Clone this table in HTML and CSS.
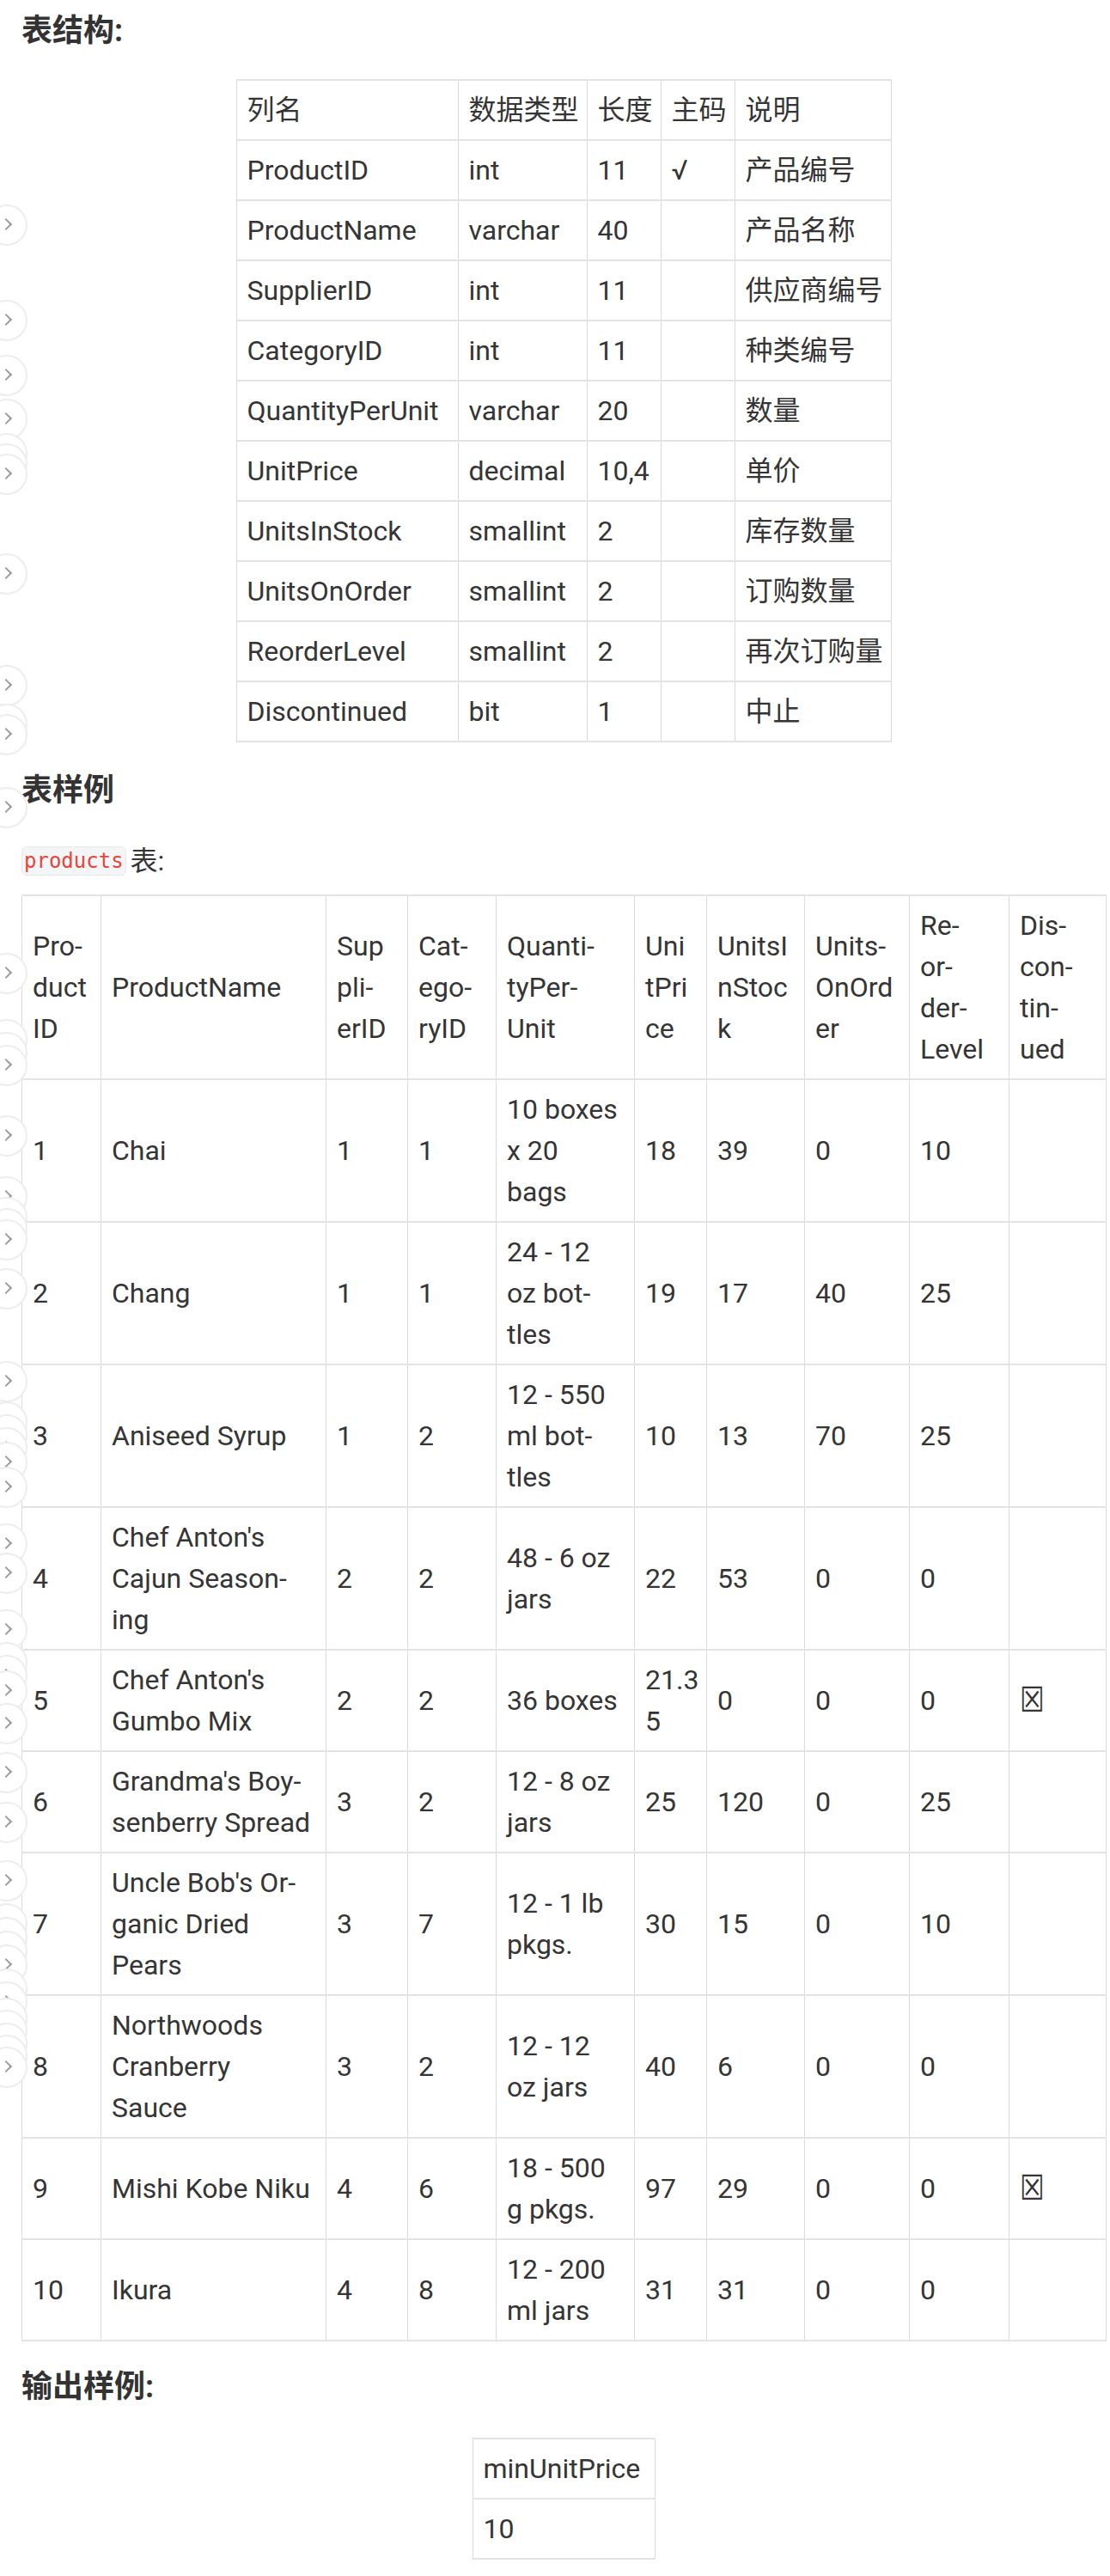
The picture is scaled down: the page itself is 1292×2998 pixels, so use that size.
FILE: index.html
```html
<!DOCTYPE html>
<html lang="zh-CN">
<head>
<meta charset="utf-8">
<title>products 表</title>
<link rel="stylesheet" href="styles.css">
</head>
<body>
<div class="page">
  <h2 class="title">表结构:</h2>
  <table class="grid schema">
    <colgroup><col class="c258"><col class="c150"><col class="c86"><col class="c86"><col class="c182"></colgroup>
    <thead>
      <tr><th>列名</th><th>数据类型</th><th>长度</th><th>主码</th><th>说明</th></tr>
    </thead>
    <tbody>
      <tr><td>ProductID</td><td>int</td><td>11</td><td>√</td><td>产品编号</td></tr>
      <tr><td>ProductName</td><td>varchar</td><td>40</td><td></td><td>产品名称</td></tr>
      <tr><td>SupplierID</td><td>int</td><td>11</td><td></td><td>供应商编号</td></tr>
      <tr><td>CategoryID</td><td>int</td><td>11</td><td></td><td>种类编号</td></tr>
      <tr><td>QuantityPerUnit</td><td>varchar</td><td>20</td><td></td><td>数量</td></tr>
      <tr><td>UnitPrice</td><td>decimal</td><td>10,4</td><td></td><td>单价</td></tr>
      <tr><td>UnitsInStock</td><td>smallint</td><td>2</td><td></td><td>库存数量</td></tr>
      <tr><td>UnitsOnOrder</td><td>smallint</td><td>2</td><td></td><td>订购数量</td></tr>
      <tr><td>ReorderLevel</td><td>smallint</td><td>2</td><td></td><td>再次订购量</td></tr>
      <tr><td>Discontinued</td><td>bit</td><td>1</td><td></td><td>中止</td></tr>
    </tbody>
  </table>

  <h2 class="title sec">表样例</h2>
  <p class="caption"><code class="inline-code">products</code>表:</p>
  <table class="grid sample">
    <colgroup>
      <col class="c92"><col class="c262"><col class="c95"><col class="c103"><col class="c161">
      <col class="c84"><col class="c114"><col class="c122"><col class="c116"><col class="c113">
    </colgroup>
    <thead>
      <tr>
        <th>Pro-<br>duct<br>ID</th>
        <th>ProductName</th>
        <th>Sup<br>pli-<br>erID</th>
        <th>Cat-<br>ego-<br>ryID</th>
        <th>Quanti-<br>tyPer-<br>Unit</th>
        <th>Uni<br>tPri<br>ce</th>
        <th>UnitsI<br>nStoc<br>k</th>
        <th>Units-<br>OnOrd<br>er</th>
        <th>Re-<br>or-<br>der-<br>Level</th>
        <th>Dis-<br>con-<br>tin-<br>ued</th>
      </tr>
    </thead>
    <tbody>
      <tr><td>1</td><td>Chai</td><td>1</td><td>1</td><td>10 boxes<br>x 20<br>bags</td><td>18</td><td>39</td><td>0</td><td>10</td><td></td></tr>
      <tr><td>2</td><td>Chang</td><td>1</td><td>1</td><td>24 - 12<br>oz bot-<br>tles</td><td>19</td><td>17</td><td>40</td><td>25</td><td></td></tr>
      <tr><td>3</td><td>Aniseed Syrup</td><td>1</td><td>2</td><td>12 - 550<br>ml bot-<br>tles</td><td>10</td><td>13</td><td>70</td><td>25</td><td></td></tr>
      <tr><td>4</td><td>Chef Anton's<br>Cajun Season-<br>ing</td><td>2</td><td>2</td><td>48 - 6 oz<br>jars</td><td>22</td><td>53</td><td>0</td><td>0</td><td></td></tr>
      <tr><td>5</td><td>Chef Anton's<br>Gumbo Mix</td><td>2</td><td>2</td><td>36 boxes</td><td>21.3<br>5</td><td>0</td><td>0</td><td>0</td><td><span class="box">☒</span></td></tr>
      <tr><td>6</td><td>Grandma's Boy-<br>senberry Spread</td><td>3</td><td>2</td><td>12 - 8 oz<br>jars</td><td>25</td><td>120</td><td>0</td><td>25</td><td></td></tr>
      <tr><td>7</td><td>Uncle Bob's Or-<br>ganic Dried<br>Pears</td><td>3</td><td>7</td><td>12 - 1 lb<br>pkgs.</td><td>30</td><td>15</td><td>0</td><td>10</td><td></td></tr>
      <tr><td>8</td><td>Northwoods<br>Cranberry<br>Sauce</td><td>3</td><td>2</td><td>12 - 12<br>oz jars</td><td>40</td><td>6</td><td>0</td><td>0</td><td></td></tr>
      <tr><td>9</td><td>Mishi Kobe Niku</td><td>4</td><td>6</td><td>18 - 500<br>g pkgs.</td><td>97</td><td>29</td><td>0</td><td>0</td><td><span class="box">☒</span></td></tr>
      <tr><td>10</td><td>Ikura</td><td>4</td><td>8</td><td>12 - 200<br>ml jars</td><td>31</td><td>31</td><td>0</td><td>0</td><td></td></tr>
    </tbody>
  </table>

  <h2 class="title out">输出样例:</h2>
  <table class="grid result">
    <colgroup><col class="c212"></colgroup>
    <thead><tr><th>minUnitPrice</th></tr></thead>
    <tbody><tr><td>10</td></tr></tbody>
  </table>

  <div class="toggles">
    <span class="tg" style="top:238px"></span>
    <span class="tg" style="top:349px"></span>
    <span class="tg" style="top:413px"></span>
    <span class="tg" style="top:464px"></span>
    <span class="tg" style="top:504px"></span>
    <span class="tg" style="top:516px"></span>
    <span class="tg" style="top:528px"></span>
    <span class="tg" style="top:644px"></span>
    <span class="tg" style="top:774px"></span>
    <span class="tg" style="top:819px"></span>
    <span class="tg" style="top:831px"></span>
    <span class="tg" style="top:916px"></span>
    <span class="tg" style="top:1109px"></span>
    <span class="tg" style="top:1186px"></span>
    <span class="tg" style="top:1201px"></span>
    <span class="tg" style="top:1216px"></span>
    <span class="tg" style="top:1298px"></span>
    <span class="tg" style="top:1369px"></span>
    <span class="tg" style="top:1393px"></span>
    <span class="tg" style="top:1406px"></span>
    <span class="tg" style="top:1419px"></span>
    <span class="tg" style="top:1476px"></span>
    <span class="tg" style="top:1584px"></span>
    <span class="tg" style="top:1631px"></span>
    <span class="tg" style="top:1646px"></span>
    <span class="tg" style="top:1661px"></span>
    <span class="tg" style="top:1678px"></span>
    <span class="tg" style="top:1707px"></span>
    <span class="tg" style="top:1773px"></span>
    <span class="tg" style="top:1807px"></span>
    <span class="tg" style="top:1873px"></span>
    <span class="tg" style="top:1911px"></span>
    <span class="tg" style="top:1926px"></span>
    <span class="tg" style="top:1944px"></span>
    <span class="tg" style="top:1982px"></span>
    <span class="tg" style="top:2039px"></span>
    <span class="tg" style="top:2097px"></span>
    <span class="tg" style="top:2165px"></span>
    <span class="tg" style="top:2215px"></span>
    <span class="tg" style="top:2231px"></span>
    <span class="tg" style="top:2247px"></span>
    <span class="tg" style="top:2263px"></span>
    <span class="tg" style="top:2291px"></span>
    <span class="tg" style="top:2306px"></span>
    <span class="tg" style="top:2325px"></span>
    <span class="tg" style="top:2339px"></span>
    <span class="tg" style="top:2354px"></span>
    <span class="tg" style="top:2368px"></span>
    <span class="tg" style="top:2382px"></span>
  </div>
</div>
</body>
</html>
```
FILE: styles.css
```css
html, body {
  margin: 0;
  padding: 0;
  background: #ffffff;
}

body {
  color: #353535;
  font-family: Roboto, "Noto Sans CJK SC", "Noto Sans", sans-serif;
  font-size: 32px;
  line-height: 48px;
}

.page {
  position: relative;
  padding: 11px 5px 0 25px;
  min-height: 2987px;
}

.title {
  margin: 0;
  font-size: 36px;
  line-height: 50px;
  font-weight: 700;
  color: #333333;
}

.title.sec {
  margin-top: 31px;
}

.title.out {
  margin-top: 28px;
}

.caption {
  margin: 33px 0 15px;
  line-height: 48px;
}

.inline-code {
  display: inline-block;
  vertical-align: top;
  margin-top: 7px;
  margin-right: 5px;
  padding: 1px 2px;
  font-family: "DejaVu Sans Mono", "Liberation Mono", monospace;
  font-size: 24px;
  line-height: 30px;
  color: #e5453b;
  background: #f4f5f6;
  border: 1px solid #e8e9ea;
  border-radius: 6px;
}

.grid {
  border-collapse: collapse;
  table-layout: fixed;
}

.grid th,
.grid td {
  padding: 10px 12px;
  text-align: left;
  vertical-align: middle;
  border-top: 2px solid #e3e3e3;
  border-bottom: 2px solid #e3e3e3;
  border-left: 1px solid #dadada;
  border-right: 1px solid #dadada;
  white-space: nowrap;
  overflow: visible;
}

.grid th {
  font-weight: 400;
}

.schema {
  width: 762px;
  margin: 31px auto 0;
}

.sample {
  width: 1262px;
  margin: 0;
}

.result {
  width: 212px;
  margin: 34px auto 0;
}

.c258 { width: 258px; }
.c150 { width: 150px; }
.c86 { width: 86px; }
.c182 { width: 182px; }
.c92 { width: 92px; }
.c262 { width: 262px; }
.c95 { width: 95px; }
.c103 { width: 103px; }
.c161 { width: 161px; }
.c84 { width: 84px; }
.c114 { width: 114px; }
.c122 { width: 122px; }
.c116 { width: 116px; }
.c113 { width: 113px; }
.c212 { width: 212px; }

.box {
  display: inline-block;
  font-family: "DejaVu Sans", sans-serif;
  font-size: 40px;
  font-weight: 300;
  transform: scaleX(0.8);
  transform-origin: left center;
}

.toggles {
  position: absolute;
  left: 0;
  top: 0;
  width: 40px;
  height: 100%;
  overflow: hidden;
  pointer-events: none;
}

.tg {
  position: absolute;
  left: -16px;
  width: 48px;
  height: 48px;
  box-sizing: border-box;
  border-radius: 50%;
  background: #ffffff;
  border: 2px solid #ededed;
}

.tg::after {
  content: "";
  position: absolute;
  left: 16px;
  top: 16px;
  width: 8px;
  height: 8px;
  border-top: 2px solid #9c9c9c;
  border-right: 2px solid #9c9c9c;
  transform: rotate(45deg);
}
```
